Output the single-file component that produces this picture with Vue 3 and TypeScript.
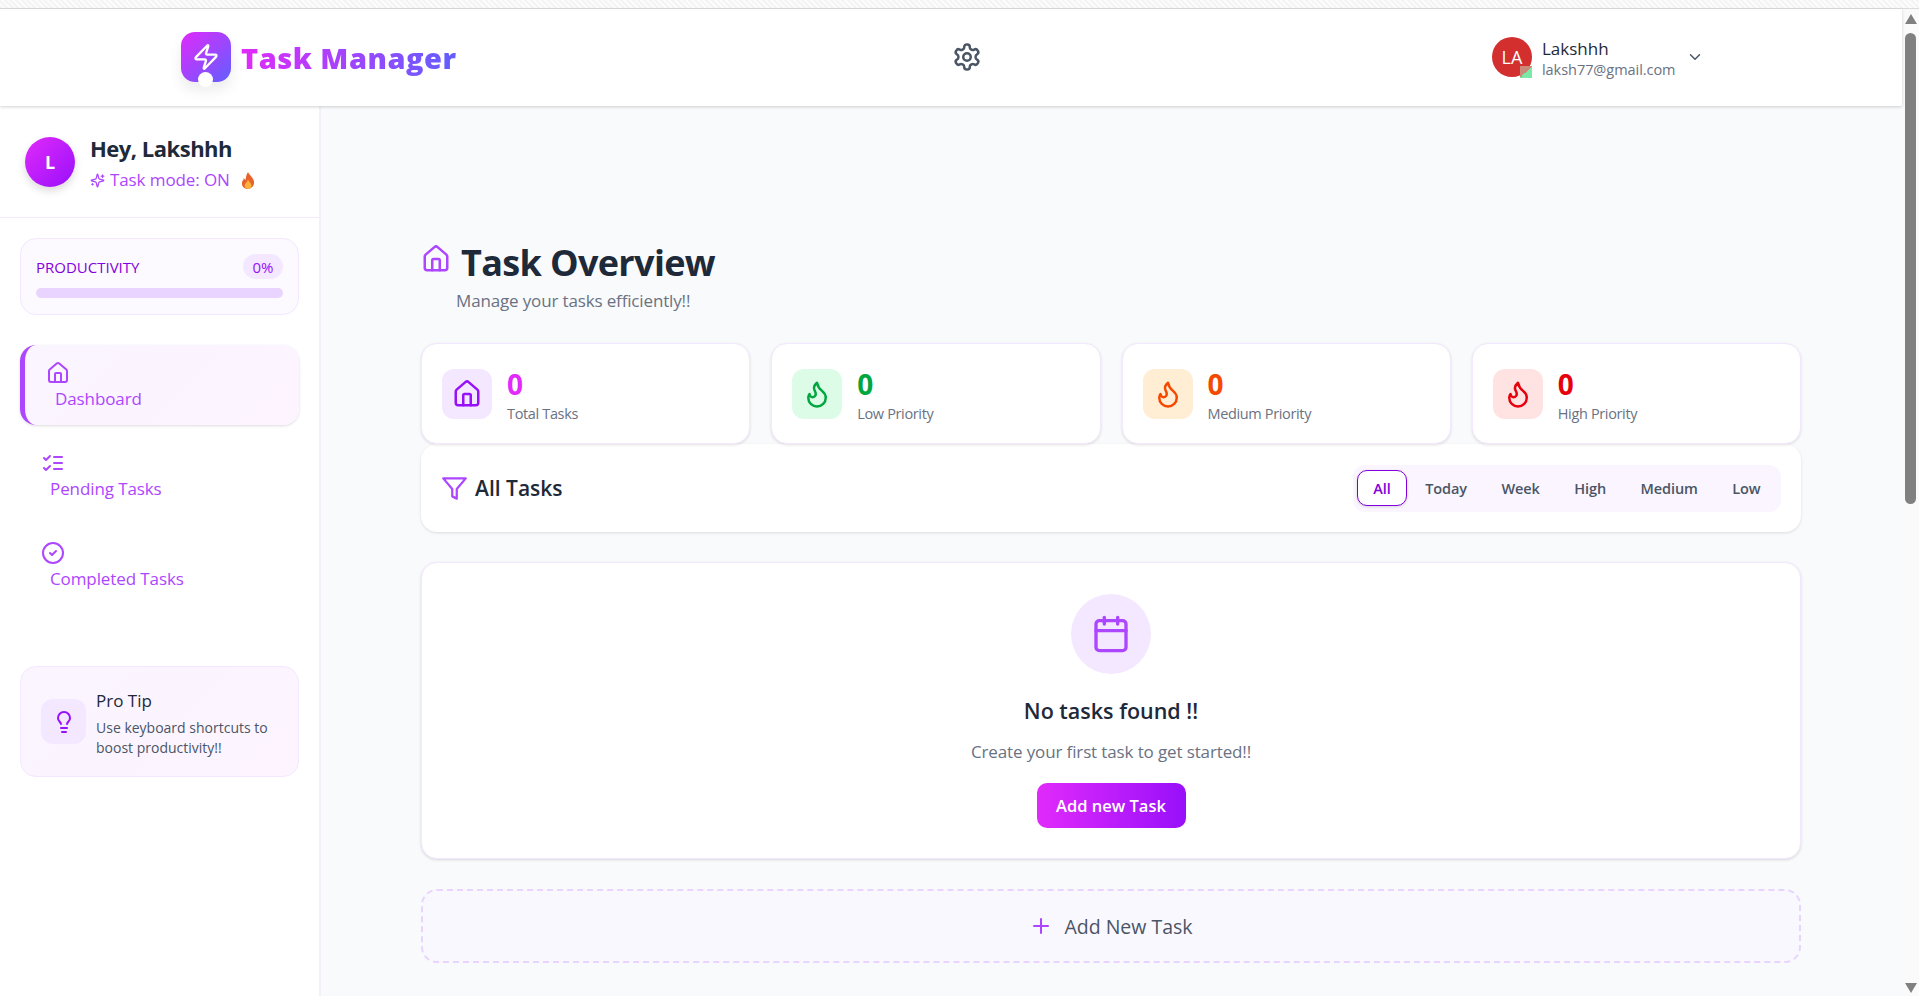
<template>
  <div class="page">
    <div class="strip"></div>
    <div class="frame">
      <div class="viewport">
        <header class="topbar">
          <div class="brand">
            <div class="brand-mark">
              <Icon name="zap" class="brand-zap" />
              <span class="brand-dot"></span>
            </div>
            <span class="brand-name">Task Manager</span>
          </div>
          <Icon name="settings" class="gear" />
          <div class="account">
            <div class="account-avatar">
              LA
              <span class="account-status"></span>
            </div>
            <div class="account-text">
              <div class="account-name">Lakshhh</div>
              <div class="account-mail">laksh77@gmail.com</div>
            </div>
            <Icon name="chevron" class="chevron" />
          </div>
        </header>

        <div class="body">
          <aside class="sidebar">
            <div class="hello">
              <div class="hello-avatar">L</div>
              <div class="hello-text">
                <div class="hello-name">Hey, Lakshhh</div>
                <div class="hello-mode">
                  <Icon name="sparkles" class="mode-icon" />
                  <span>Task mode: ON</span>
                  <svg class="fire" viewBox="0 0 16 20">
                    <path d="M8 0c1 3 6 6 7 11 1 5-3 9-7 9s-8-3-7-8c.5-2 2-3 2-5 1 1 1.500 2 2 2.500C5.500 6 6 3 8 0z" fill="#e8622c" />
                    <path d="M8 9c1 2 4 4 4 7s-2 4-4 4-4-1.500-4-4 3-4 4-7z" fill="#fbb33c" />
                  </svg>
                </div>
              </div>
            </div>

            <div class="progress-card">
              <div class="progress-head">
                <span class="progress-label">PRODUCTIVITY</span>
                <span class="progress-badge">0%</span>
              </div>
              <div class="progress-track"></div>
            </div>

            <nav class="nav">
              <a
                v-for="item in navItems"
                :key="item.label"
                class="nav-item"
                :class="{ active: item.active }"
              >
                <Icon :name="item.icon" class="nav-icon" />
                <span class="nav-label">{{ item.label }}</span>
              </a>
            </nav>

            <div class="tip">
              <div class="tip-icon"><Icon name="bulb" class="tip-bulb" /></div>
              <div class="tip-body">
                <div class="tip-title">Pro Tip</div>
                <div class="tip-text">Use keyboard shortcuts to boost productivity!!</div>
              </div>
            </div>
          </aside>

          <main class="main">
            <div class="title-row">
              <Icon name="house" class="title-icon" />
              <h1 class="title">Task Overview</h1>
            </div>
            <p class="subtitle">Manage your tasks efficiently!!</p>

            <section class="stats">
              <div v-for="stat in stats" :key="stat.label" class="stat">
                <div class="stat-icon" :style="{ background: stat.bg, color: stat.color }">
                  <Icon :name="stat.icon" class="stat-glyph" />
                </div>
                <div class="stat-text">
                  <div class="stat-value" :style="{ color: stat.value }">0</div>
                  <div class="stat-label">{{ stat.label }}</div>
                </div>
              </div>
            </section>

            <section class="filter-bar">
              <div class="filter-title">
                <Icon name="funnel" class="filter-icon" />
                <span>All Tasks</span>
              </div>
              <div class="pills">
                <button
                  v-for="(pill, i) in pills"
                  :key="pill"
                  class="pill"
                  :class="{ current: i === 0 }"
                >{{ pill }}</button>
              </div>
            </section>

            <section class="empty">
              <div class="empty-circle"><Icon name="calendar" class="empty-icon" /></div>
              <h2 class="empty-title">No tasks found !!</h2>
              <p class="empty-text">Create your first task to get started!!</p>
              <button class="add-btn">Add new Task</button>
            </section>

            <button class="add-dashed">
              <Icon name="plus" class="plus" />
              <span>Add New Task</span>
            </button>
          </main>
        </div>
      </div>

      <div class="scrollbar">
        <span class="arrow up"></span>
        <span class="thumb"></span>
        <span class="arrow down"></span>
      </div>
    </div>
  </div>
</template>

<script setup lang="ts">
import { h } from 'vue';

const icons: Record<string, string[]> = {
  zap: ['M4 14a1 1 0 0 1-.78-1.630l9.900-10.200a.5.5 0 0 1 .86.46l-1.920 6.020A1 1 0 0 0 13 10h7a1 1 0 0 1 .78 1.630l-9.900 10.200a.5.5 0 0 1-.86-.46l1.920-6.020A1 1 0 0 0 11 14z'],
  settings: [
    'M12.220 2h-.44a2 2 0 0 0-2 2v.18a2 2 0 0 1-1 1.730l-.43.25a2 2 0 0 1-2 0l-.15-.08a2 2 0 0 0-2.730.73l-.22.38a2 2 0 0 0 .73 2.730l.15.1a2 2 0 0 1 1 1.720v.51a2 2 0 0 1-1 1.740l-.15.09a2 2 0 0 0-.73 2.730l.22.38a2 2 0 0 0 2.730.73l.15-.08a2 2 0 0 1 2 0l.43.25a2 2 0 0 1 1 1.730V20a2 2 0 0 0 2 2h.44a2 2 0 0 0 2-2v-.18a2 2 0 0 1 1-1.730l.43-.25a2 2 0 0 1 2 0l.15.08a2 2 0 0 0 2.730-.73l.22-.39a2 2 0 0 0-.73-2.730l-.15-.08a2 2 0 0 1-1-1.740v-.5a2 2 0 0 1 1-1.740l.15-.09a2 2 0 0 0 .73-2.730l-.22-.38a2 2 0 0 0-2.730-.73l-.15.08a2 2 0 0 1-2 0l-.43-.25a2 2 0 0 1-1-1.730V4a2 2 0 0 0-2-2z',
    'M15 12a3 3 0 1 1-6 0 3 3 0 1 1 6 0z',
  ],
  chevron: ['m6 9 6 6 6-6'],
  sparkles: [
    'M9.937 15.500A2 2 0 0 0 8.500 14.063l-6.135-1.582a.5.5 0 0 1 0-.962L8.500 9.936A2 2 0 0 0 9.937 8.500l1.582-6.135a.5.5 0 0 1 .963 0L14.063 8.500A2 2 0 0 0 15.500 9.937l6.135 1.581a.5.5 0 0 1 0 .964L15.500 14.063a2 2 0 0 0-1.437 1.437l-1.582 6.135a.5.5 0 0 1-.963 0z',
    'M20 3v4',
    'M22 5h-4',
    'M4 17v2',
    'M5 18H3',
  ],
  house: [
    'M15 21v-8a1 1 0 0 0-1-1h-4a1 1 0 0 0-1 1v8',
    'M3 10a2 2 0 0 1 .709-1.528l7-5.999a2 2 0 0 1 2.582 0l7 5.999A2 2 0 0 1 21 10v9a2 2 0 0 1-2 2H5a2 2 0 0 1-2-2z',
  ],
  list: ['m3 17 2 2 4-4', 'm3 7 2 2 4-4', 'M13 6h8', 'M13 12h8', 'M13 18h8'],
  check: ['M22 12a10 10 0 1 1-20 0 10 10 0 1 1 20 0z', 'm9 12 2 2 4-4'],
  bulb: [
    'M15 14c.2-1 .7-1.700 1.500-2.500 1-.9 1.500-2.200 1.500-3.500A6 6 0 0 0 6 8c0 1 .2 2.200 1.500 3.500.7.7 1.300 1.500 1.500 2.500',
    'M9 18h6',
    'M10 22h4',
  ],
  funnel: ['M22 3H2l8 9.460V19l4 2v-8.540L22 3z'],
  flame: ['M8.500 14.500A2.500 2.500 0 0 0 11 12c0-1.380-.5-2-1-3-1.072-2.143-.224-4.054 2-6 .5 2.500 2 4.900 4 6.500 2 1.600 3 3.500 3 5.500a7 7 0 1 1-14 0c0-1.153.433-2.294 1-3a2.500 2.500 0 0 0 2.500 2.500z'],
  calendar: ['M8 2v4', 'M16 2v4', 'M5 4h14a2 2 0 0 1 2 2v14a2 2 0 0 1-2 2H5a2 2 0 0 1-2-2V6a2 2 0 0 1 2-2z', 'M3 10h18'],
  plus: ['M5 12h14', 'M12 5v14'],
};

// Обёртка над набором контурных иконок
const Icon = (props: { name: string }) =>
  h(
    'svg',
    {
      viewBox: '0 0 24 24',
      fill: 'none',
      stroke: 'currentColor',
      'stroke-width': 2,
      'stroke-linecap': 'round',
      'stroke-linejoin': 'round',
    },
    icons[props.name].map((d) => h('path', { d })),
  );
Icon.props = ['name'];

const navItems = [
  { label: 'Dashboard', icon: 'house', active: true },
  { label: 'Pending Tasks', icon: 'list', active: false },
  { label: 'Completed Tasks', icon: 'check', active: false },
];

const stats = [
  { label: 'Total Tasks', icon: 'house', bg: '#f3e8ff', color: '#9810fa', value: '#e12afb' },
  { label: 'Low Priority', icon: 'flame', bg: '#dcfce7', color: '#00a63e', value: '#00a63e' },
  { label: 'Medium Priority', icon: 'flame', bg: '#ffedd4', color: '#f54900', value: '#f54900' },
  { label: 'High Priority', icon: 'flame', bg: '#ffe2e2', color: '#e7000b', value: '#e7000b' },
];

const pills = ['All', 'Today', 'Week', 'High', 'Medium', 'Low'];
</script>

<style>
html,
body {
  margin: 0;
  overflow: hidden;
}
</style>

<style scoped>
.page {
  height: 996px;
  display: flex;
  flex-direction: column;
  overflow: hidden;
  background: #f9fafb;
  color: #1e2939;
  font-family: "Open Sans", "Noto Sans", sans-serif;
}

.strip {
  height: 9px;
  flex: none;
  box-sizing: border-box;
  border-bottom: 1px solid #dcdcdc;
  background: repeating-linear-gradient(45deg, #f4f4f4 0 2px, #fcfcfc 2px 4px);
}

.frame {
  flex: 1;
  display: flex;
  min-height: 0;
}

.viewport {
  flex: 1;
  min-width: 0;
  display: flex;
  flex-direction: column;
}

/* Шапка */
.topbar {
  height: 97px;
  flex: none;
  box-sizing: border-box;
  padding: 0 198px 1px 181px;
  display: flex;
  align-items: center;
  justify-content: space-between;
  background: #fff;
  box-shadow: 0 1px 3px rgba(0, 0, 0, 0.18);
  position: relative;
  z-index: 2;
}

.brand {
  display: flex;
  align-items: center;
  gap: 10px;
}

.brand-mark {
  width: 50px;
  height: 50px;
  border-radius: 14px;
  background: linear-gradient(135deg, #e12afb, #615fff);
  box-shadow: 0 8px 14px rgba(0, 0, 0, 0.08);
  display: flex;
  align-items: center;
  justify-content: center;
  position: relative;
}

.brand-zap {
  width: 28px;
  height: 28px;
  color: #fff;
}

.brand-dot {
  position: absolute;
  left: 17px;
  bottom: -5px;
  width: 15px;
  height: 15px;
  border-radius: 50%;
  background: #fff;
}

.brand-name {
  font-size: 29px;
  font-weight: 800;
  letter-spacing: 0.5px;
  line-height: 36px;
  margin-top: 2px;
  background: linear-gradient(90deg, #e12afb, #615fff);
  -webkit-background-clip: text;
  background-clip: text;
  color: transparent;
}

.gear {
  width: 30px;
  height: 30px;
  color: #4a5565;
  margin-left: -15px;
}

.account {
  display: flex;
  align-items: center;
}

.account-avatar {
  width: 40px;
  height: 40px;
  border-radius: 50%;
  background: #d32f2f;
  color: #fff;
  font-size: 18px;
  display: flex;
  align-items: center;
  justify-content: center;
  position: relative;
}

.account-status {
  position: absolute;
  right: 0;
  bottom: -1px;
  width: 12px;
  height: 12px;
  background: linear-gradient(135deg, #c98a7a 50%, #7be8a6 50%);
}

.account-text {
  margin: 3px 0 0 10px;
  width: 144px;
}

.account-name {
  font-size: 17px;
  font-weight: 500;
  line-height: 23px;
}

.account-mail {
  font-size: 14.500px;
  color: #6a7282;
  line-height: 20px;
  letter-spacing: -0.05px;
}

.chevron {
  width: 18px;
  height: 18px;
  color: #4a5565;
}

.body {
  flex: 1;
  display: flex;
  min-height: 0;
}

/* Боковая панель */
.sidebar {
  width: 321px;
  flex: none;
  box-sizing: border-box;
  border-right: 2px solid #f3f0f8;
  background: #fff;
}

.hello {
  height: 112px;
  box-sizing: border-box;
  padding: 0 25px;
  display: flex;
  align-items: center;
  gap: 15px;
  border-bottom: 1px solid #f3e8ff;
}

.hello-avatar {
  width: 50px;
  height: 50px;
  flex: none;
  border-radius: 50%;
  background: linear-gradient(135deg, #e12afb, #9810fa);
  box-shadow: 0 4px 8px rgba(0, 0, 0, 0.14);
  color: #fff;
  font-size: 18px;
  font-weight: 700;
  display: flex;
  align-items: center;
  justify-content: center;
}

.hello-text {
  padding-top: 3px;
}

.hello-name {
  font-size: 22px;
  font-weight: 700;
  line-height: 30px;
  letter-spacing: -0.5px;
}

.hello-mode {
  display: flex;
  align-items: center;
  gap: 5px;
  margin-top: 4px;
  font-size: 17px;
  font-weight: 500;
  line-height: 26px;
  letter-spacing: -0.1px;
  color: #ad46ff;
}

.mode-icon {
  width: 15px;
  height: 15px;
}

.fire {
  width: 14px;
  height: 17px;
  margin-left: 6px;
}

.progress-card {
  margin: 20px 20px 0;
  height: 77px;
  box-sizing: border-box;
  padding: 15px 15px 0;
  border: 1px solid #f3e8ff;
  border-radius: 16px;
  background: #fcf9ff;
}

.progress-head {
  display: flex;
  align-items: center;
  justify-content: space-between;
}

.progress-label {
  font-size: 15px;
  font-weight: 500;
  color: #8200db;
}

.progress-badge {
  width: 40px;
  height: 25px;
  border-radius: 13px;
  background: #f3e8ff;
  color: #9810fa;
  font-size: 15px;
  display: flex;
  align-items: center;
  justify-content: center;
}

.progress-track {
  height: 10px;
  margin-top: 9px;
  border-radius: 5px;
  background: #e9d4ff;
}

.nav {
  margin: 30px 20px 0;
}

.nav-item {
  display: block;
  box-sizing: border-box;
  height: 82px;
  padding: 18px 0 0 21px;
  margin-bottom: 8px;
  color: #ad46ff;
}

.nav-item.active {
  height: 80px;
  margin-top: 2px;
  padding: 16px 0 0 21px;
  border-left: 5px solid #ad46ff;
  border-radius: 16px;
  background: linear-gradient(135deg, #faf5ff, #fdf4ff);
  box-shadow: 0 1px 3px rgba(0, 0, 0, 0.14);
}

.nav-icon {
  display: block;
  width: 24px;
  height: 24px;
}

.nav-label {
  display: block;
  margin: 1px 0 0 9px;
  font-size: 17px;
  font-weight: 500;
  line-height: 26px;
  letter-spacing: -0.1px;
}

.tip {
  margin: 61px 20px 0;
  height: 111px;
  box-sizing: border-box;
  padding: 0 20px;
  display: flex;
  align-items: center;
  gap: 10px;
  border: 1px solid #f3e8ff;
  border-radius: 16px;
  background: linear-gradient(135deg, #faf5ff, #fdf4ff);
}

.tip-icon {
  width: 45px;
  height: 45px;
  flex: none;
  border-radius: 12px;
  background: #f3e8ff;
  display: flex;
  align-items: center;
  justify-content: center;
}

.tip-bulb {
  width: 24px;
  height: 24px;
  color: #9810fa;
}

.tip-body {
  padding-top: 4px;
}

.tip-title {
  font-size: 17px;
  font-weight: 500;
  line-height: 24px;
}

.tip-text {
  font-size: 14px;
  line-height: 20px;
  margin-top: 5px;
  color: #4a5565;
}

/* Основная область */
.main {
  flex: 1;
  min-width: 0;
  padding: 135px 101px 0 100px;
}

.title-row {
  display: flex;
  align-items: center;
  gap: 10px;
}

.title-icon {
  width: 30px;
  height: 30px;
  color: #ad46ff;
  margin-top: -8px;
}

.title {
  margin: 0;
  font-size: 36px;
  font-weight: 700;
  line-height: 44px;
  letter-spacing: -0.65px;
}

.subtitle {
  margin: 4px 0 0 35px;
  font-size: 17px;
  line-height: 24px;
  letter-spacing: -0.15px;
  color: #6a7282;
}

.stats {
  margin-top: 30px;
  display: grid;
  grid-template-columns: repeat(4, 1fr);
  gap: 21px;
}

.stat {
  height: 101px;
  box-sizing: border-box;
  padding: 0 20px;
  display: flex;
  align-items: center;
  gap: 15px;
  background: #fff;
  border: 1px solid #f3e8ff;
  border-radius: 16px;
  box-shadow: 0 1px 3px rgba(0, 0, 0, 0.12);
}

.stat-icon {
  width: 50px;
  height: 50px;
  flex: none;
  border-radius: 12px;
  display: flex;
  align-items: center;
  justify-content: center;
}

.stat-glyph {
  width: 30px;
  height: 30px;
}

.stat-text {
  padding-top: 4px;
}

.stat-value {
  font-size: 28px;
  font-weight: 700;
  line-height: 32px;
}

.stat-label {
  margin-top: 4px;
  font-size: 14.500px;
  line-height: 20px;
  letter-spacing: -0.35px;
  color: #6a7282;
}

.filter-bar {
  height: 88px;
  box-sizing: border-box;
  padding: 0 20px;
  display: flex;
  align-items: center;
  justify-content: space-between;
  background: #fff;
  border-radius: 16px;
  box-shadow: 0 1px 3px rgba(0, 0, 0, 0.12);
}

.filter-title {
  display: flex;
  align-items: center;
  gap: 7px;
  font-size: 21px;
  font-weight: 600;
}

.filter-icon {
  width: 27px;
  height: 27px;
  color: #ad46ff;
}

.pills {
  height: 47px;
  box-sizing: border-box;
  padding: 0 4px;
  display: flex;
  align-items: center;
  gap: 1.500px;
  background: #faf5ff;
  border-radius: 12px;
}

.pill {
  height: 36px;
  padding: 0 15.500px;
  border: 1px solid transparent;
  border-radius: 10px;
  background: none;
  font-family: inherit;
  font-size: 14.500px;
  font-weight: 600;
  letter-spacing: -0.1px;
  color: #4a5565;
}

.pill.current {
  background: #fff;
  border-color: #8200db;
  color: #8200db;
  box-shadow: 0 1px 3px rgba(0, 0, 0, 0.14);
}

.empty {
  margin-top: 30px;
  height: 297px;
  box-sizing: border-box;
  padding-top: 31px;
  display: flex;
  flex-direction: column;
  align-items: center;
  background: #fff;
  border: 1px solid #f3e8ff;
  border-radius: 16px;
  box-shadow: 0 1px 3px rgba(0, 0, 0, 0.14);
}

.empty-circle {
  width: 80px;
  height: 80px;
  border-radius: 50%;
  background: #f3e8ff;
  display: flex;
  align-items: center;
  justify-content: center;
}

.empty-icon {
  width: 40px;
  height: 40px;
  color: #ad46ff;
}

.empty-title {
  margin: 22px 0 0;
  font-size: 21.500px;
  font-weight: 600;
  line-height: 30px;
}

.empty-text {
  margin: 14px 0 0;
  font-size: 17px;
  line-height: 24px;
  letter-spacing: -0.13px;
  color: #6a7282;
}

.add-btn {
  margin-top: 19px;
  width: 149px;
  height: 45px;
  border: 0;
  border-radius: 10px;
  background: linear-gradient(90deg, #e12afb, #9810fa);
  color: #fff;
  font-family: inherit;
  font-size: 16.500px;
  font-weight: 600;
}

.add-dashed {
  margin-top: 30px;
  width: 100%;
  height: 74px;
  border: 2px dashed #e9d4ff;
  border-radius: 16px;
  background: #faf8ff;
  display: flex;
  align-items: center;
  justify-content: center;
  gap: 11px;
  color: #4a5565;
  font-family: inherit;
  font-size: 19.500px;
  font-weight: 500;
}

.plus {
  width: 24px;
  height: 24px;
  color: #ad46ff;
}

/* Полоса прокрутки */
.scrollbar {
  width: 17px;
  flex: none;
  background: #fafafa;
  display: flex;
  flex-direction: column;
  align-items: center;
  position: relative;
}

.arrow {
  width: 0;
  height: 0;
  border-left: 6px solid transparent;
  border-right: 6px solid transparent;
  position: absolute;
}

.arrow.up {
  top: 5px;
  border-bottom: 10px solid #808080;
}

.arrow.down {
  bottom: 3px;
  border-top: 10px solid #808080;
}

.thumb {
  position: absolute;
  top: 24px;
  width: 11px;
  height: 471px;
  border-radius: 6px;
  background: #808080;
}
</style>
